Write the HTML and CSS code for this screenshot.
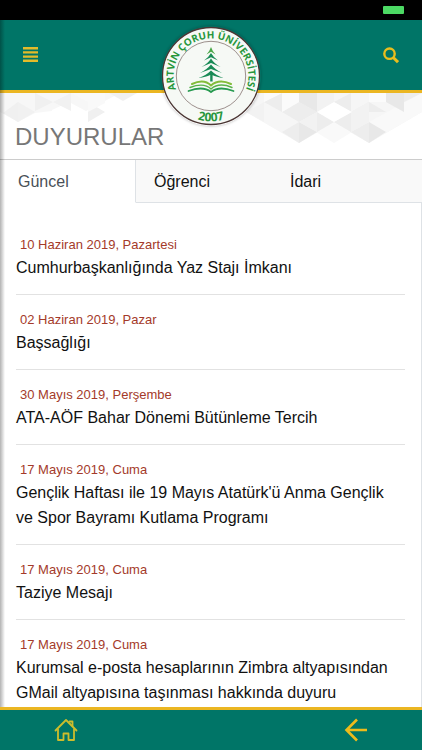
FILE: index.html
```html
<!DOCTYPE html>
<html lang="tr">
<head>
    <meta charset="UTF-8">
    <meta name="viewport" content="width=device-width, initial-scale=1.0">
    <title>Duyurular</title>
    <link rel="stylesheet" href="styles.css">
</head>
<body>

    <div class="status-bar">
        <span class="battery"></span>
    </div>

    <div class="page">
        <header class="header">
            <button type="button" class="icon-button" aria-label="Menü">
                <svg width="16" height="16" viewBox="0 0 16 16" fill="#e3bb2a">
                    <path d="M0 0h15v2.400H0zM0 4.200h15v2.400H0zM0 8.400h15v2.400H0zM0 12.600h15v2.400H0z"/>
                </svg>
            </button>

            <a href="#" class="logo" aria-label="Artvin Çoruh Üniversitesi">
                <svg width="100" height="100" viewBox="0 0 100 100">
                    <defs>
                        <path id="nameArc" d="M50 87.500 A37.500 37.500 0 0 1 50 12.500 A37.500 37.500 0 0 1 50 87.500"/>
                        <path id="yearArc" d="M4.500 50 A45.500 45.500 0 0 0 95.500 50"/>
                    </defs>
                    <circle cx="50" cy="50" r="48.500" fill="#f6f9f5" stroke="#4b3634" stroke-width="1.300"/>
                    <circle cx="50" cy="50" r="34.700" fill="none" stroke="#76625f" stroke-width="0.700"/>
                    <text class="logo-name"><textPath href="#nameArc" startOffset="50%">ARTVİN ÇORUH ÜNİVERSİTESİ</textPath></text>
                    <text class="logo-year"><textPath href="#yearArc" startOffset="50%">2007</textPath></text>
                    <!-- tree -->
                    <g fill="#188a55">
                        <path fill="#4aa748" d="M50 21 Q51.500 25.500 54.500 28.500 L50 25.800 L45.500 28.500 Q48.500 25.500 50 21Z"/>
                        <path d="M50 27 Q52.500 31.500 57 34.500 L50 31.200 L43 34.500 Q47.500 31.500 50 27Z"/>
                        <path d="M50 32.500 Q53 37.500 59.500 41 L50 37 L40.500 41 Q47 37.500 50 32.500Z"/>
                        <path d="M50 38.500 Q54 43.500 61 47 L50 43 L39 47 Q46 43.500 50 38.500Z"/>
                        <path d="M50 44.500 Q54.500 49 62.500 52 Q55 51 51.600 49.300 V55.500 H49.200 V49 Q45 51 37.500 52 Q45.500 49 50 44.500Z"/>
                    </g>
                    <!-- book -->
                    <g fill="none" stroke-linecap="round">
                        <path d="M31 58 Q43 52.500 50 59.500 Q58 52.500 70 58" stroke="#83bd3b" stroke-width="2"/>
                        <path d="M29 61.500 Q43 56 50 63 Q58 56 71 61.500" stroke="#58b14a" stroke-width="1.400"/>
                        <path d="M27.500 65 Q42 59.500 50 66 Q58 59.500 72.500 65" stroke="#279a50" stroke-width="1.800"/>
                    </g>
                </svg>
            </a>

            <button type="button" class="icon-button" aria-label="Ara">
                <svg width="16" height="17" viewBox="0 0 16 17" fill="none" stroke="#e9bd1d">
                    <circle cx="6.500" cy="6.700" r="5.200" stroke-width="2.400"/>
                    <path d="M10.500 10.700 L15 15.200" stroke-width="3"/>
                </svg>
            </button>
        </header>

        <div class="title-bar">
            <svg class="pattern" viewBox="0 0 422 66" aria-hidden="true">
                <!-- left side -->
                <path fill="#f7f7f7" d="M0 0h120l-17 9-17 9-17-9-17 8v1L35 20 18 29 0 19z"/>
                <path fill="#f0f0f0" d="M18 9v20L3 20zM35 0v18l18-9zM88 9l17 10-17 10zM109 0h28l-14 8z"/>
                <path fill="#f1f1f1" d="M18 29V9l17 10zM53 9L71 0v18z"/>
                <path fill="#f9f9f9" d="M71 0h17v9zM88 0h17v10L88 19z"/>
                <!-- right side -->
                <path fill="#f6f6f6" d="M246 0h176v19l-53 31-35-20-35 20-53-31z"/>
                <path fill="#f9f9f9" d="M334 29l18 10-18 11-18-11zM369 50V29l53-29v19z"/>
                <path fill="#ededed" d="M264 9l18-9v19zM282 19l17-10 18 10-18 10zM299 29v21l-17-11zM317 19v20l17-10zM334 9l17-9v19zM351 19l18-10 17 10zM334 29l17-10v20zM369 29v21l-18-11zM404 0h18l-18 9z"/>
                <path fill="#e8e8e8" d="M299 9V0h18v19zM299 29l18 10-18 11zM369 29l17 10-17 11zM386 0h18v19l-18-10z"/>
                <path fill="#f2f2f2" d="M317 0h17v9l-17 10zM299 29l18-10v20zM351 39l18-10V9l-18 10zM264 9v20l-18-10z"/>
                <path fill="#fbfbfb" d="M264 0h18l-18 9zM282 0h17v9l-17 10zM369 0h17v9l-17 0z"/>
                <path fill="#ffffff" d="M334 9l18 10-18 10-17-10z"/>
            </svg>
            <h1 class="title">DUYURULAR</h1>
        </div>

        <nav class="tabs">
            <button type="button" class="tab active">Güncel</button>
            <button type="button" class="tab">Öğrenci</button>
            <button type="button" class="tab">İdari</button>
            <span class="tab-rest"></span>
        </nav>

        <main class="list">
            <article class="item">
                <time class="date" datetime="2019-06-10">10 Haziran 2019, Pazartesi</time>
                <a href="#" class="item-title">Cumhurbaşkanlığında Yaz Stajı İmkanı</a>
            </article>
            <article class="item">
                <time class="date" datetime="2019-06-02">02 Haziran 2019, Pazar</time>
                <a href="#" class="item-title">Başsağlığı</a>
            </article>
            <article class="item">
                <time class="date" datetime="2019-05-30">30 Mayıs 2019, Perşembe</time>
                <a href="#" class="item-title">ATA-AÖF Bahar Dönemi Bütünleme Tercih</a>
            </article>
            <article class="item">
                <time class="date" datetime="2019-05-17">17 Mayıs 2019, Cuma</time>
                <a href="#" class="item-title">Gençlik Haftası ile 19 Mayıs Atatürk'ü Anma Gençlik ve Spor Bayramı Kutlama Programı</a>
            </article>
            <article class="item">
                <time class="date" datetime="2019-05-17">17 Mayıs 2019, Cuma</time>
                <a href="#" class="item-title">Taziye Mesajı</a>
            </article>
            <article class="item">
                <time class="date" datetime="2019-05-17">17 Mayıs 2019, Cuma</time>
                <a href="#" class="item-title">Kurumsal e-posta hesaplarının Zimbra altyapısından GMail altyapısına taşınması hakkında duyuru</a>
            </article>
        </main>
    </div>

    <footer class="footer">
        <a href="#" class="footer-link" aria-label="Ana sayfa">
            <svg width="24" height="24" viewBox="0 0 24 24" fill="none" stroke="#ccbd2c" stroke-width="1.800" stroke-linejoin="round" stroke-linecap="round">
                <path d="M1.500 12.500 L12 2 L22.500 12.500"/>
                <path d="M4 11.500 V22 H9.500 V15.500 H14.500 V22 H20 V11.500"/>
                <path d="M15.500 3.500 H18.500 V8"/>
            </svg>
        </a>
        <a href="#" class="footer-link" aria-label="Geri">
            <svg width="24" height="24" viewBox="0 0 24 24" fill="none" stroke="#edbb1b" stroke-width="2.600">
                <path d="M13 1.500 L2.500 12 L13 22.500 M2.500 12 H23"/>
            </svg>
        </a>
    </footer>

</body>
</html>
```

FILE: styles.css
```css
* {
    box-sizing: border-box;
}
body {
    margin: 0;
    height: 100vh;
    display: flex;
    flex-direction: column;
    font-family: "Liberation Sans", Arial, sans-serif;
    font-size: 16px;
    color: #111;
    background: #fff;
}
button {
    font: inherit;
    border: none;
    background: none;
    cursor: pointer;
}
svg {
    display: block;
}
.status-bar {
    flex: none;
    height: 20px;
    padding: 0 18px;
    display: flex;
    align-items: center;
    justify-content: flex-end;
    background: #000;
}
.battery {
    width: 21px;
    height: 8px;
    border-radius: 1px;
    background: #4cd964;
}
.page {
    position: relative;
    flex: 1;
    min-height: 0;
    display: flex;
    flex-direction: column;
}
.page::after {
    content: "";
    position: absolute;
    top: 0;
    bottom: 0;
    left: 0;
    width: 5px;
    background: linear-gradient(to right, rgba(0, 0, 0, 0.3), rgba(0, 0, 0, 0));
    pointer-events: none;
}
.header {
    position: relative;
    flex: none;
    height: 73px;
    padding: 0 15px;
    display: flex;
    align-items: center;
    justify-content: space-between;
    background: #007567;
    border-bottom: 3px solid #ebb622;
}
.icon-button {
    padding: 8px;
}
.logo {
    position: absolute;
    z-index: 1;
    top: 6px;
    left: 50%;
    margin-left: -50px;
    border-radius: 50%;
    box-shadow: 0 0 3px rgba(0, 0, 0, 0.3);
}
.logo-name,
.logo-year {
    font-family: "Open Sans", sans-serif;
    font-weight: 700;
    text-anchor: middle;
    fill: #27963c;
}
.logo-name {
    font-size: 10px;
}
.logo-year {
    font-size: 12px;
}
.title-bar {
    position: relative;
    flex: none;
    height: 67px;
    padding: 30px 15px 0;
    border-bottom: 1px solid #ccc;
}
.pattern {
    position: absolute;
    top: 0;
    left: 0;
    width: 100%;
}
.title {
    position: relative;
    margin: 0;
    font-size: 24px;
    line-height: 28px;
    font-weight: normal;
    color: #777;
}
.tabs {
    flex: none;
    display: flex;
    height: 43px;
}
.tab {
    width: 136px;
    padding: 2px 18px 0;
    text-align: left;
    color: #111;
    background: #f9f9f9;
    border-bottom: 1px solid #dee2e6;
}
.tab.active {
    color: #495057;
    background: #fff;
    border-right: 1px solid #dee2e6;
    border-bottom-color: #fff;
}
.tab-rest {
    flex: 1;
    background: #f9f9f9;
    border-bottom: 1px solid #dee2e6;
}
.list {
    flex: 1;
    min-height: 0;
    padding: 17px 16px 0;
    overflow-y: auto;
    scrollbar-width: none;
    border-right: 1px solid #dee2e6;
}
.item {
    padding: 15px 0 14px;
    border-bottom: 1px solid #e2e2e2;
}
.date {
    display: block;
    padding-left: 4px;
    font-size: 13px;
    line-height: 20px;
    color: #a43a2a;
}
.item-title {
    display: block;
    padding-right: 8px;
    line-height: 25px;
    color: #111;
    text-decoration: none;
}
.footer {
    flex: none;
    height: 43px;
    display: flex;
    align-items: center;
    justify-content: space-between;
    padding: 0 54px;
    background: #007567;
    border-top: 3px solid #ebb622;
}
```
